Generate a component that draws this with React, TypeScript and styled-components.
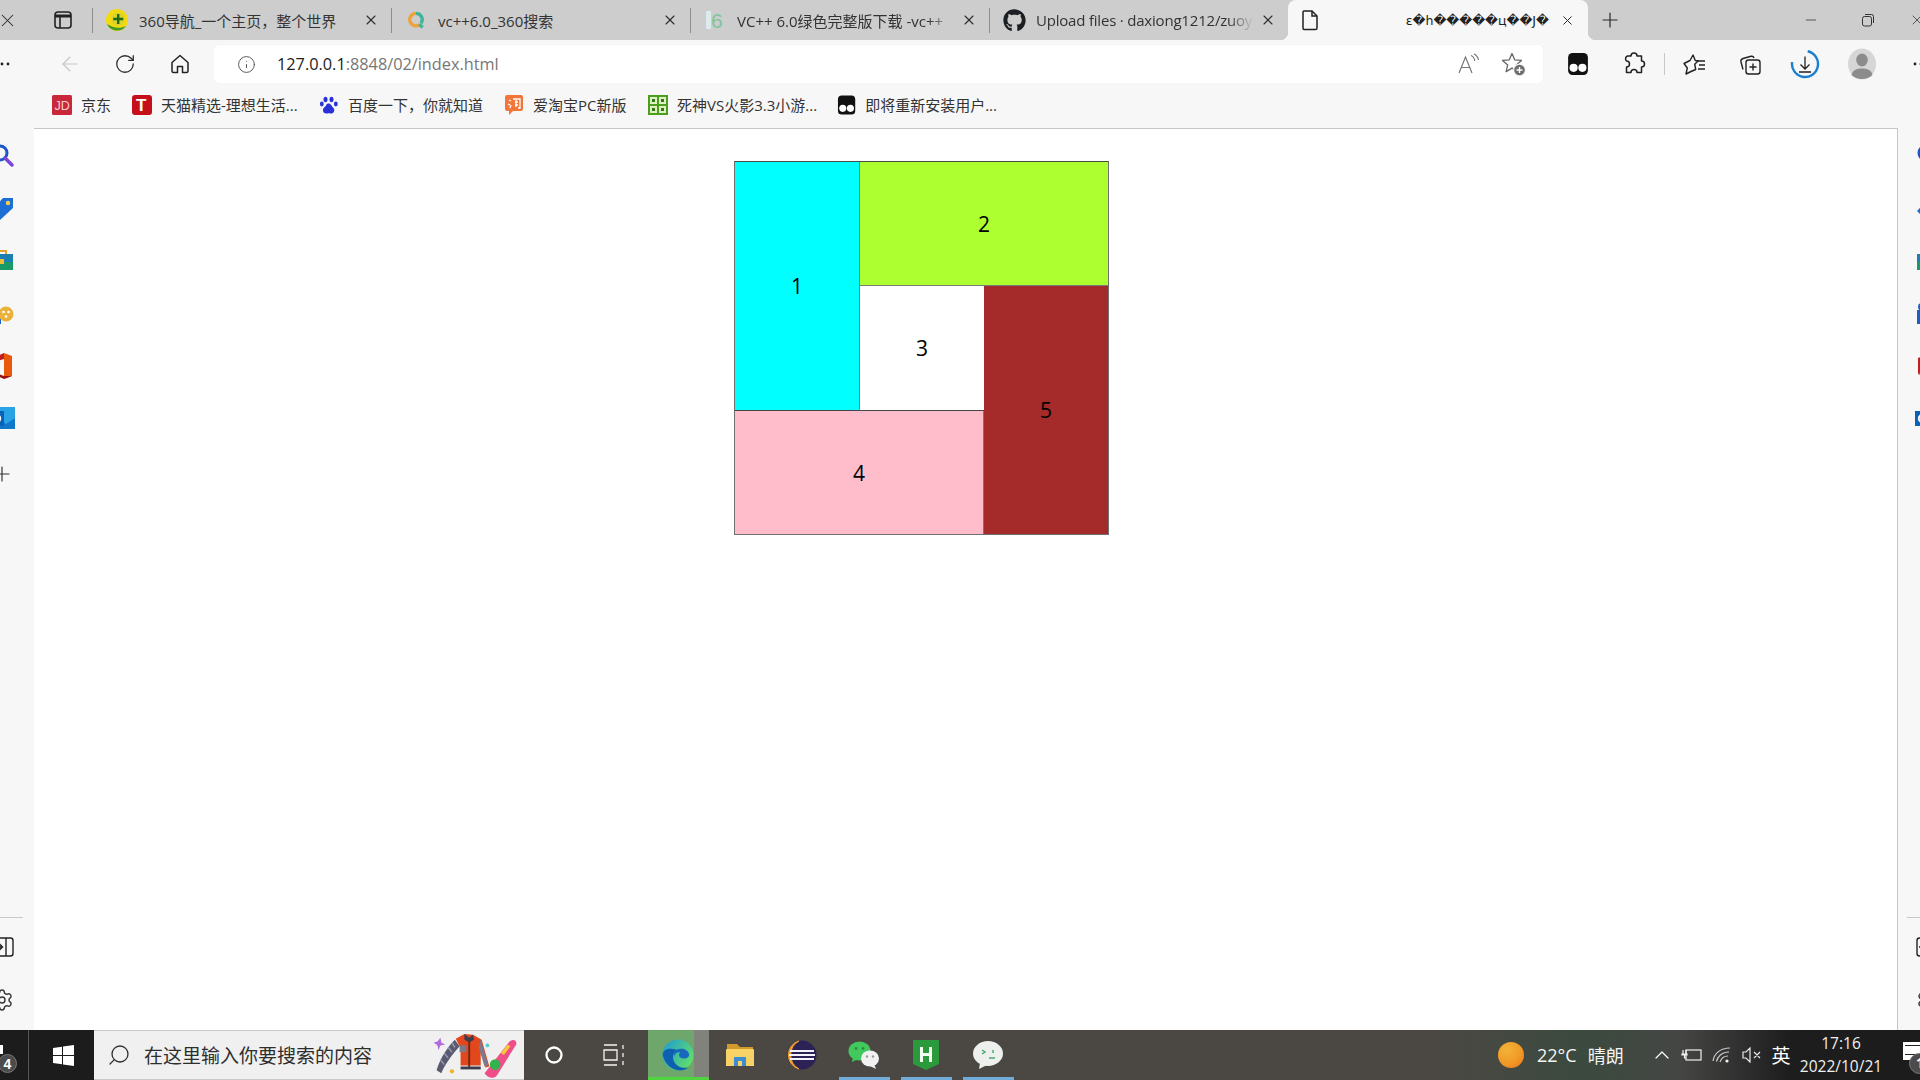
import React from 'react'
import styled, { createGlobalStyle } from 'styled-components'
import { FaGithub } from 'react-icons/fa'
import { ArrowLeft, RotateCw, Plus, X, Minus, Info, Search, ChevronUp, Settings } from 'lucide-react'

const GlobalStyle = createGlobalStyle`
  html, body { margin: 0; padding: 0; background: #fff; }
  body { width: 1920px; height: 1080px; overflow: hidden; font-family: "Open Sans", "Noto Sans CJK SC", sans-serif; }
  * { box-sizing: border-box; }
`

const Page = styled.div`
  width: 1920px;
  height: 1080px;
  display: flex;
  flex-direction: column;
  overflow: hidden;
`

/* ---- tab strip ---- */
const TabStrip = styled.div`
  height: 40px;
  flex: none;
  display: flex;
  align-items: center;
  background: #cdcdcd;
  color: #2b2b2b;
`
const Slot = styled.div<{ $w: number }>`
  width: ${p => p.$w}px;
  flex: none;
  display: flex;
  align-items: center;
  justify-content: center;
`
const ClippedLeft = styled.div<{ $w: number }>`
  width: ${p => p.$w}px;
  flex: none;
  display: flex;
  align-items: center;
  svg { margin-left: -3px; }
`
const EdgeClose = styled(X)`
  margin-left: 18px;
  flex: none;
`
const TabDivider = styled.div`
  width: 1px;
  height: 25px;
  flex: none;
  background: #8d8d8d;
`
const Tab = styled.div`
  width: 298px;
  height: 40px;
  flex: none;
  display: flex;
  align-items: center;
  padding: 0 12px;
`
const FavBox = styled.div`
  width: 24px;
  flex: none;
  display: flex;
  justify-content: center;
`
const TabTitle = styled.div<{ $fade?: boolean; $tight?: boolean }>`
  flex: 1;
  min-width: 0;
  margin: 0 6px 0 10px;
  font-size: 15px;
  white-space: nowrap;
  overflow: hidden;
  color: #333;
  ${p => p.$tight && 'letter-spacing: -0.2px;'}
  ${p => p.$fade && 'mask-image: linear-gradient(to right, #000 88%, transparent 100%);'}
`
const ActiveTab = styled.div`
  position: relative;
  width: 300px;
  height: 40px;
  flex: none;
  display: flex;
  align-items: center;
  padding: 0 13px 0 11px;
  background: #f7f7f7;
  border-radius: 8px 8px 0 0;
  &::before, &::after {
    content: '';
    position: absolute;
    bottom: 0;
    width: 8px;
    height: 8px;
  }
  &::before { left: -8px; background: radial-gradient(circle at 0 0, transparent 8px, #f7f7f7 8.5px); }
  &::after { right: -8px; background: radial-gradient(circle at 100% 0, transparent 8px, #f7f7f7 8.5px); }
`
const GarbledTitle = styled.div`
  flex: 1;
  text-align: right;
  margin-right: 11px;
  font-family: "DejaVu Sans", sans-serif;
  font-size: 12.6px;
  white-space: nowrap;
  color: #222;
`
const Spacer = styled.div`
  flex: 1;
`

/* ---- toolbar ---- */
const Toolbar = styled.div`
  height: 43px;
  flex: none;
  display: flex;
  align-items: flex-end;
  background: #f7f7f7;
  color: #2b2b2b;
`
const ToolbarBtn = styled.div<{ $w: number }>`
  width: ${p => p.$w}px;
  height: 38px;
  flex: none;
  display: flex;
  align-items: center;
  justify-content: center;
`
const ClippedDots = styled.div`
  width: 42px;
  height: 38px;
  flex: none;
  display: flex;
  align-items: center;
`
const AddressBar = styled.div`
  width: 1329px;
  height: 38px;
  flex: none;
  margin-left: 7px;
  display: flex;
  align-items: center;
  padding-left: 23px;
  background: #fff;
  border-radius: 5px;
  box-shadow: 0 0 2px rgba(0, 0, 0, 0.06);
`
const Url = styled.div`
  flex: 1;
  margin-left: 21px;
  font-size: 16.3px;
  color: #767676;
  b { font-weight: 400; color: #222; }
`
const ToolbarDivider = styled.div`
  width: 1px;
  height: 22px;
  flex: none;
  margin: 0 15px 8px 10px;
  align-self: flex-end;
  background: #c9c9c9;
`

/* ---- bookmarks ---- */
const BookmarkWrap = styled.div`
  height: 46px;
  flex: none;
  background: #f7f7f7;
  padding: 0 22px 0 34px;
`
const BookmarkRow = styled.div`
  height: 46px;
  display: flex;
  align-items: center;
  padding: 0 0 2px 18px;
  border-bottom: 1px solid #c6c6c6;
`
const Bookmark = styled.div<{ $w: number }>`
  width: ${p => p.$w}px;
  flex: none;
  display: flex;
  align-items: center;
  gap: 9px;
  font-size: 15px;
  color: #333;
  white-space: nowrap;
`

/* ---- main area ---- */
const Main = styled.div`
  flex: 1;
  min-height: 0;
  display: flex;
`
const SideBar = styled.div<{ $w: number; $shift: number }>`
  width: ${p => p.$w}px;
  flex: none;
  display: flex;
  flex-direction: column;
  align-items: center;
  padding-bottom: 4px;
  overflow: hidden;
  background: #f7f7f7;
  color: #333;
  & > * { margin-left: ${p => p.$shift}px; flex: none; }
`
const SideIcon = styled.div`
  width: 30px;
  height: 52.6px;
  display: flex;
  align-items: center;
  justify-content: center;
`
const SidePlus = styled(SideIcon)`
  padding-top: 6px;
`
const SideGap = styled.div`
  flex: 1;
`
const SideLine = styled.div`
  width: 42px;
  height: 1px;
  background: #c8c8c8;
  margin-bottom: 3px;
`
const Content = styled.div`
  flex: 1;
  background: #fff;
  border-right: 1px solid #c6c6c6;
  padding: 32px 0 0 700px;
`
const Board = styled.div`
  width: 375px;
  height: 374px;
  display: grid;
  grid-template-columns: 125px 124px 124px;
  grid-template-rows: 124px 125px 123px;
  border: 1px solid #707070;
  border-top-color: #4a4a4a;
`
const Cell = styled.div<{ $bg: string; $col: string; $row: string; $right?: string; $bottom?: string }>`
  grid-column: ${p => p.$col};
  grid-row: ${p => p.$row};
  display: flex;
  align-items: center;
  justify-content: center;
  background: ${p => p.$bg};
  border-right: ${p => (p.$right ? `1px solid ${p.$right}` : 'none')};
  border-bottom: ${p => (p.$bottom ? `1px solid ${p.$bottom}` : 'none')};
  font-family: "Open Sans", sans-serif;
  font-size: 21px;
  color: #000;
`

/* ---- taskbar ---- */
const Taskbar = styled.div`
  height: 50px;
  flex: none;
  display: flex;
  color: #fff;
  background: linear-gradient(to right, #4b4843 0, #4b4843 1440px, #3b4a3e 1580px, #454644 1680px, #1d1d1d 1790px, #1c1c1c 100%);
`
const StartArea = styled.div`
  position: relative;
  width: 94px;
  flex: none;
  display: flex;
  align-items: center;
  background: #1c1c1c;
`
const HiddenWindow = styled.div`
  width: 29px;
  height: 50px;
  flex: none;
  border-right: 1px solid #555;
`
const LeftCount = styled.div`
  position: absolute;
  left: -2px;
  top: 24px;
  width: 19px;
  height: 19px;
  display: flex;
  align-items: center;
  justify-content: center;
  border-radius: 50%;
  background: #4b4b4b;
  border: 1px solid #777;
  font-family: "Liberation Sans", sans-serif;
  font-size: 14px;
  font-weight: 700;
`
const LeftTile = styled.div`
  position: absolute;
  left: 0;
  top: 15px;
  width: 3px;
  height: 9px;
  background: #fff;
`
const StartBtn = styled.div`
  flex: 1;
  display: flex;
  justify-content: center;
  padding-left: 3px;
`
const SearchBox = styled.div`
  width: 430px;
  flex: none;
  display: flex;
  align-items: center;
  padding: 0 2px 0 13px;
  background: #f0f0f0;
  border-top: 1px solid #c8c8c8;
  border-bottom: 1px solid #c8c8c8;
  color: #2e2e2e;
`
const MirroredSearch = styled(Search)`
  flex: none;
  transform: scaleX(-1);
`
const SearchText = styled.div`
  flex: 1;
  margin-left: 13px;
  font-size: 19px;
  white-space: nowrap;
`
const TaskBtn = styled.div<{ $w: number; $open?: boolean }>`
  position: relative;
  width: ${p => p.$w}px;
  height: 50px;
  flex: none;
  display: flex;
  align-items: center;
  justify-content: center;
  ${p => p.$open && `
    &::after {
      content: '';
      position: absolute;
      left: 6px;
      right: 5px;
      bottom: 0;
      height: 3px;
      background: #71acd9;
    }
  `}
`
const EdgeBtn = styled.div`
  width: 61px;
  height: 50px;
  flex: none;
  margin-left: 4px;
  padding: 3px 1px 0 0;
  display: flex;
  align-items: center;
  justify-content: center;
  border-bottom: 3px solid #4fd33f;
  background: linear-gradient(to right, #6fa66c 0, #6fa66c 46px, #82827c 46px);
`
const Tray = styled.div`
  margin-left: auto;
  width: 422px;
  flex: none;
  display: flex;
  align-items: center;
  position: relative;
`
const Weather = styled.div`
  width: 149px;
  flex: none;
  display: flex;
  align-items: center;
  font-size: 18px;
  color: #f4f4f4;
  span:first-of-type { margin: 0 11px 0 13px; }
`
const Sun = styled.div`
  width: 26px;
  height: 26px;
  flex: none;
  border-radius: 50%;
  background: radial-gradient(circle at 35% 30%, #f3b23a 0, #f09a26 55%, #ef6f16 100%);
`
const TrayIcon = styled.div`
  width: 30px;
  flex: none;
  display: flex;
  justify-content: center;
`
const Lang = styled.div`
  width: 28px;
  flex: none;
  text-align: center;
  font-size: 19px;
`
const Clock = styled.div`
  width: 92px;
  flex: none;
  text-align: center;
  font-size: 15.5px;
  line-height: 23px;
  color: #f0f0f0;
  font-family: "Open Sans", sans-serif;
`
const NotifyBox = styled.div`
  width: 17px;
  height: 18px;
  margin: -8px 0 0 16px;
  flex: none;
  background: #fff;
  padding: 3px 0 0 2px;
  &::before {
    content: '';
    display: block;
    height: 8px;
    border-top: 1px solid #222;
    border-bottom: 1px solid #222;
  }
`
const NotifyCount = styled.div`
  position: absolute;
  left: 411px;
  top: 23px;
  width: 21px;
  height: 21px;
  padding-left: 6px;
  border-radius: 50%;
  background: #4b4b4b;
  border: 1px solid #777;
  font-size: 14px;
  font-weight: 700;
  line-height: 18px;
`

/* ---- drawings ---- */
const Fav360 = () => (
  <svg width="24" height="24" viewBox="0 0 24 24">
    <circle cx="12" cy="12" r="11" fill="#f4d90f" />
    <path d="M2 16a11 11 0 0 0 19 2c-6 3-13 2-19-2z" fill="#3f9a2a" />
    <circle cx="13" cy="11" r="6.6" fill="#d8d22a" />
    <path d="M12 6h2.4v3.8h3.8v2.4h-3.8V16H12v-3.8H8.2V9.8H12z" fill="#1f6b14" />
  </svg>
)
const FavSearch = () => (
  <svg width="20" height="20" viewBox="0 0 24 24" fill="none">
    <path d="M12 4a7.5 7.5 0 1 0 4.5 13.5" stroke="#f0a23a" strokeWidth="4" />
    <path d="M12 4a7.5 7.5 0 0 1 6 12" stroke="#3fb59c" strokeWidth="4" />
    <path d="M16 17l4 4" stroke="#3fb59c" strokeWidth="4" />
  </svg>
)
const FavSix = () => (
  <svg width="24" height="24" viewBox="0 0 24 24">
    <rect x="3" y="3" width="5" height="18" fill="#dcebee" />
    <text x="8" y="20" fontFamily="Liberation Sans" fontSize="21" fill="#7fc59a">6</text>
  </svg>
)
const PageIcon = () => (
  <svg width="22" height="24" viewBox="0 0 22 24" fill="none" stroke="#222" strokeWidth="1.5">
    <path d="M5 3h8l5 5v12a1.500 1.500 0 0 1-1.500 1.500h-11.500A1.500 1.500 0 0 1 4 20V4.500A1.500 1.500 0 0 1 5 3z" />
    <path d="M13 3v5h5" />
  </svg>
)
const TabPanelIcon = () => (
  <svg width="20" height="20" viewBox="0 0 20 20" fill="none" stroke="#222" strokeWidth="1.6">
    <rect x="2" y="2" width="16" height="16" rx="3" />
    <path d="M2 6h16" strokeWidth="3" />
    <path d="M7 6v12" />
  </svg>
)
const RestoreIcon = () => (
  <svg width="14" height="14" viewBox="0 0 14 14" fill="none" stroke="#333" strokeWidth="1">
    <rect x="1.500" y="3.500" width="9" height="9.500" rx="2" />
    <path d="M4 1.500h6.500a2 2 0 0 1 2 2V10" />
  </svg>
)
const HomeIcon = () => (
  <svg width="22" height="22" viewBox="0 0 22 22" fill="none" stroke="#222" strokeWidth="1.5" strokeLinejoin="round">
    <path d="M11 2.500L3 9.500V18a1.500 1.500 0 0 0 1.500 1.500H8.500V13.500h5v6h4A1.500 1.500 0 0 0 19 18V9.500z" />
  </svg>
)
const ReadAloudIcon = () => (
  <svg width="24" height="24" viewBox="0 0 24 24" fill="none" stroke="#777" strokeWidth="1.2">
    <path d="M2 21L8.500 5l6.500 16M4.500 15.500h8" />
    <path d="M14 3.500c2.500 1 3.500 3 3.800 5.500M17 2c2.800 1.300 4 3.500 4.500 6" />
  </svg>
)
const StarPlusIcon = () => (
  <svg width="26" height="26" viewBox="0 0 26 26" fill="none">
    <path d="M11 2.500l2.700 6.300 6.800.600-5.200 4.500 1.600 6.700-5.900-3.500-5.900 3.500 1.600-6.700-5.200-4.500 6.800-.600z" stroke="#666" strokeWidth="1.3" strokeLinejoin="round" />
    <circle cx="18.500" cy="19" r="6.500" fill="#f7f7f7" />
    <circle cx="18.500" cy="19" r="5.300" fill="#6e6e6e" />
    <path d="M18.500 16v6M15.500 19h6" stroke="#fff" strokeWidth="1.400" />
  </svg>
)
const MonkeyIcon = ({ size }: { size: number }) => (
  <svg width={size} height={size} viewBox="0 0 20 20">
    <rect x="1" y="0" width="18" height="20" rx="4" fill="#111" />
    <circle cx="6" cy="13.500" r="3.700" fill="#fff" />
    <circle cx="14" cy="13.500" r="3.700" fill="#fff" />
  </svg>
)
const PuzzleIcon = () => (
  <svg width="24" height="26" viewBox="0 0 24 26" fill="none" stroke="#222" strokeWidth="1.5" strokeLinejoin="round">
    <path d="M9 5a3 3 0 0 1 6 0h4.500v5a3 3 0 0 1 0 6v5.500H15a3 3 0 0 0-6 0H4.500V16a3 3 0 0 0 0-6 3 3 0 0 1 1-5z" />
  </svg>
)
const FavListIcon = () => (
  <svg width="24" height="24" viewBox="0 0 24 24" fill="none" stroke="#222" strokeWidth="1.4" strokeLinejoin="round">
    <path d="M10 3l2.300 5.500 3 .3-3.600 3.400 1 5.300L8 19.500l-5 2.500 1.300-6L1 11.500 7 8.500z" />
    <path d="M15 9h7M16 13h6M15 17h7" />
  </svg>
)
const CollectionsIcon = () => (
  <svg width="24" height="24" viewBox="0 0 24 24" fill="none" stroke="#222" strokeWidth="1.4">
    <rect x="8" y="8" width="14" height="14" rx="2.500" />
    <path d="M15 11.500v7M11.500 15h7" />
    <path d="M5 17.500l-2-7.500A3 3 0 0 1 5 6.500L13 4.300a2.500 2.500 0 0 1 3 1.700" />
  </svg>
)
const DownloadIcon = () => (
  <svg width="30" height="32" viewBox="0 0 30 32" fill="none">
    <circle cx="15" cy="16" r="13" stroke="#1a7fd0" strokeWidth="2.400" strokeDasharray="60 22" transform="rotate(-78 15 16)" />
    <path d="M15 8.500v12M10.500 16.500l4.500 4.500 4.500-4.500M9 24h12" stroke="#222" strokeWidth="1.300" />
  </svg>
)
const AvatarIcon = () => (
  <svg width="28" height="32" viewBox="0 0 28 32">
    <ellipse cx="14" cy="16" rx="14" ry="15.500" fill="#d6d6d6" />
    <ellipse cx="14" cy="12" rx="5.800" ry="6.500" fill="#8c8c8c" />
    <path d="M3.500 27c1-5 5-6.500 10.500-6.500S23.500 22 24.500 27c-2.600 2.600-6.500 4-10.500 4s-8-1.400-10.500-4z" fill="#8c8c8c" />
  </svg>
)
const Dots = ({ count }: { count: number }) => (
  <svg width={count === 2 ? 10 : 22} height="4" viewBox={`0 0 ${count === 2 ? 10 : 22} 4`} fill="#222">
    <circle cx="2" cy="2" r="1.400" />
    <circle cx="8" cy="2" r="1.400" />
    {count === 3 && <circle cx="14" cy="2" r="1.400" />}
  </svg>
)
const JdIcon = () => (
  <svg width="20" height="20" viewBox="0 0 20 20">
    <rect width="20" height="20" rx="1.500" fill="#c8283a" />
    <text x="2.500" y="15" fontFamily="Liberation Sans" fontSize="12.500" fill="#f6cfd3">JD</text>
  </svg>
)
const TmallIcon = () => (
  <svg width="20" height="20" viewBox="0 0 20 20">
    <rect width="20" height="20" rx="3" fill="#c5101c" />
    <text x="4" y="16" fontFamily="Liberation Sans" fontWeight="700" fontSize="17" fill="#fff">T</text>
  </svg>
)
const BaiduIcon = () => (
  <svg width="20" height="20" viewBox="0 0 20 20" fill="#2932d8">
    <ellipse cx="6.500" cy="4.500" rx="2" ry="2.800" />
    <ellipse cx="12.500" cy="4.500" rx="2" ry="2.800" />
    <ellipse cx="2.800" cy="9" rx="1.900" ry="2.400" />
    <ellipse cx="16.800" cy="9" rx="1.900" ry="2.400" />
    <path d="M9.500 8.500c2.500 0 3 2.500 5 4.500 2 2.500 0 6-3 5.500-1-.2-2-.3-3 0-3 .5-5-1.500-4.500-4 .5-2.500 3-3 3-4 .5-1.500 1.500-2 2.500-2z" />
  </svg>
)
const TaoIcon = () => (
  <svg width="20" height="22" viewBox="0 0 20 22">
    <path d="M3 1h14a2 2 0 0 1 2 2v12a2 2 0 0 1-2 2H9l-4 4v-4H3a2 2 0 0 1-2-2V3a2 2 0 0 1 2-2z" fill="#f2763a" />
    <path d="M5 6l2 1M4 10l2 1M6 14l1-3M9 5h7v9h-2M11 8h3M11 11h3M12 6v7" stroke="#fff" strokeWidth="1.300" fill="none" />
  </svg>
)
const GameIcon = () => (
  <svg width="20" height="20" viewBox="0 0 20 20">
    <rect width="20" height="20" fill="#4b9f1d" />
    <path d="M2 2h7v7H2zM11 2h7v7h-7zM2 11h7v7H2zM11 11h7v7h-7z" fill="#dff0c8" />
    <path d="M4 4h3v3H4zM13 4h3v3h-3zM4 13h3v3H4zM13 13h3v3h-3z" fill="#2f7a10" />
  </svg>
)
const SearchGlass = () => (
  <svg width="26" height="26" viewBox="0 0 26 26" fill="none">
    <circle cx="11" cy="11" r="7" stroke="#1c55c7" strokeWidth="3" />
    <path d="M16 16l7 7" stroke="#7a44d8" strokeWidth="3.500" strokeLinecap="round" />
  </svg>
)
const TagIcon = () => (
  <svg width="26" height="26" viewBox="0 0 26 26">
    <path d="M14 3h10v10L11 25 2 16z" fill="#1d6fd6" />
    <circle cx="19" cy="8" r="2.200" fill="#f6d24a" />
  </svg>
)
const ToolboxIcon = () => (
  <svg width="26" height="26" viewBox="0 0 26 26">
    <path d="M9 7V4h8v3" stroke="#e2a52a" strokeWidth="2" fill="none" />
    <rect x="2" y="7" width="22" height="8" fill="#1b7fb0" />
    <rect x="2" y="15" width="22" height="8" fill="#1a9a66" />
    <rect x="11" y="12" width="4" height="5" fill="#f2bc3a" />
  </svg>
)
const GamesIcon = () => (
  <svg width="26" height="26" viewBox="0 0 26 26">
    <circle cx="7" cy="7" r="4" fill="#1b5fc4" />
    <rect x="2" y="10" width="10" height="14" fill="#1b5fc4" />
    <circle cx="17" cy="14" r="7.500" fill="#eab23b" />
    <circle cx="14.500" cy="12" r="1.300" fill="#fff" />
    <circle cx="19.500" cy="12" r="1.300" fill="#fff" />
    <circle cx="17" cy="16.500" r="1.300" fill="#fff" />
  </svg>
)
const OfficeIcon = () => (
  <svg width="26" height="28" viewBox="0 0 26 28">
    <path d="M15 1l8 3v20l-8 3z" fill="#e8590c" />
    <path d="M15 1L3 6v16l5-2V9l7-2z" fill="#c2201f" />
    <path d="M3 22l12 5 8-3H15l-8-3z" fill="#9b1414" />
  </svg>
)
const OutlookIcon = () => (
  <svg width="26" height="26" viewBox="0 0 26 26">
    <rect x="8" y="2" width="18" height="22" fill="#2aa3e6" />
    <path d="M8 13l9 6 9-6v11H8z" fill="#0f78c8" />
    <rect x="0" y="6" width="15" height="15" fill="#0a62b8" />
    <circle cx="7.500" cy="13.500" r="3.700" fill="none" stroke="#fff" strokeWidth="2" />
  </svg>
)
const LoginIcon = () => (
  <svg width="26" height="22" viewBox="0 0 26 22" fill="none" stroke="#222" strokeWidth="1.400">
    <rect x="2" y="2" width="22" height="18" rx="2.500" />
    <path d="M17 2v18M4 11h9M10 7.500l3.500 3.500-3.500 3.500" />
  </svg>
)
const WinLogo = () => (
  <svg width="21" height="21" viewBox="0 0 21 21" fill="#fff">
    <path d="M0 3l9-1.300V10H0zM10 1.500L21 0v10H10zM0 11h9v8.300L0 18zM10 11h11v10l-11-1.500z" />
  </svg>
)
const SearchArt = () => (
  <svg width="96" height="48" viewBox="0 0 92 50">
    <path d="M4 12l4-1 3-4 1 5 4 2-5 1-2 5-1-5z" fill="#b06be0" />
    <path d="M26 9C20 15 11 27 7 41l5 3c4-10 12-20 19-28z" fill="#5a5a70" />
    <path d="M23 12l3 5M19 17l4 5M15 23l4 5M11 30l4 5" stroke="#9a9ab0" strokeWidth="1.500" />
    <path d="M27 8l9-5 9 1 9 5 8 28-4 1-5-15v13H32V18z" fill="#e2481b" />
    <path d="M36 3l5 4 4-3 1 5-5 3-5-3z" fill="#3d3d4e" />
    <path d="M40 10h2v28h-2z" fill="#6b2a18" />
    <path d="M53 9l8 27-4 1-6-20z" fill="#7d7a90" />
    <rect x="31" y="15" width="7" height="7" fill="#7a7a88" />
    <rect x="32" y="37" width="21" height="3" fill="#3d3d4e" />
    <circle cx="23" cy="42" r="2.200" fill="#f0b020" />
    <circle cx="60" cy="15" r="2" fill="#58d0d0" />
    <path d="M57 44L83 11c3-3 8-2 7 3L70 46c-3 4-9 4-13-2z" fill="#ee4f88" />
    <circle cx="68" cy="35" r="5.500" fill="#2fb34a" />
    <path d="M74 23l7-9 3 2-7 9z" fill="#f5c93b" />
  </svg>
)
const CortanaIcon = () => (
  <svg width="20" height="20" viewBox="0 0 20 20" fill="none">
    <circle cx="10" cy="10" r="7.500" stroke="#fff" strokeWidth="2.300" />
  </svg>
)
const TaskViewIcon = () => (
  <svg width="22" height="22" viewBox="0 0 22 22" fill="none" stroke="#f2f2f2" strokeWidth="1.300">
    <path d="M1 1h13M1 21h13M1 6h13v10H1zM20 1v4M20 9v4M20 17v4" />
  </svg>
)
const EdgeIcon = () => (
  <svg width="32" height="32" viewBox="0 0 32 32">
    <defs>
      <linearGradient id="edgeTop" x1="0" y1="0" x2="1" y2="0.600">
        <stop offset="0" stopColor="#1c9ad6" />
        <stop offset="1" stopColor="#5fdc6e" />
      </linearGradient>
    </defs>
    <circle cx="16" cy="16" r="15.500" fill="url(#edgeTop)" />
    <path d="M.6 15C2 24 9 31.500 18 31.400c3-.1 6-1 8.500-3-6 1.500-12-1-14.500-6-2-4-1-9 3-11.500C8 8.500 2 10 .6 15z" fill="#0d5fb0" />
    <path d="M15 10.500c5-2 11 0 12 4.500.5 2.500-1.500 4.500-5 4.500-3 0-5-1.500-5-3.500 0-1.200.5-2 1.300-2.400C16 12.800 13 14 12.500 17.500 11.500 14 12.500 11.500 15 10.500z" fill="#1668bc" />
  </svg>
)
const FolderIcon = () => (
  <svg width="30" height="26" viewBox="0 0 30 26">
    <path d="M2 2h10l3 3h13v4H2z" fill="#d29a2a" />
    <path d="M2 7h26a1 1 0 0 1 1 1v16H1V8a1 1 0 0 1 1-1z" fill="#f6d267" />
    <path d="M9 15h12v9h-4v-5h-4v5H9z" fill="#3d8bd0" />
  </svg>
)
const EclipseIcon = () => (
  <svg width="32" height="30" viewBox="0 0 32 30">
    <circle cx="16" cy="15" r="14.500" fill="#2c2255" />
    <path d="M13 1A14.500 14.500 0 0 0 13 29 16 16 0 0 1 13 1z" fill="#f0a030" stroke="#f0a030" />
    <path d="M4 10h24v2H4zM3 14h26v2H3zM4 18h24v2H4z" fill="#f5f5ff" />
  </svg>
)
const WechatIcon = () => (
  <svg width="32" height="30" viewBox="0 0 32 30">
    <ellipse cx="11.500" cy="11" rx="11" ry="9.500" fill="#42c95e" />
    <path d="M5 17l-1 5 6-3z" fill="#42c95e" />
    <circle cx="8" cy="8.500" r="1.400" fill="#2c8f40" />
    <circle cx="15" cy="8.500" r="1.400" fill="#2c8f40" />
    <ellipse cx="22" cy="18.500" rx="9" ry="8" fill="#f1f1f1" />
    <path d="M26 24l2 5-6-3z" fill="#f1f1f1" />
    <circle cx="19" cy="16.500" r="1.200" fill="#999" />
    <circle cx="25" cy="16.500" r="1.200" fill="#999" />
  </svg>
)
const HbuilderIcon = () => (
  <svg width="26" height="30" viewBox="0 0 26 30">
    <path d="M0 0h26v24l-13 6-13-6z" fill="#2b9a3d" />
    <path d="M7 7h3v6h6V7h3v15h-3v-6h-6v6H7z" fill="#f4fff4" />
  </svg>
)
const ChatIcon = () => (
  <svg width="32" height="30" viewBox="0 0 32 30">
    <ellipse cx="16" cy="13.500" rx="15" ry="12.500" fill="#eef0ee" />
    <path d="M8 23l-1 6 8-4z" fill="#eef0ee" />
    <path d="M10 10l3 2-3 2M21 10v3M17 18h6" stroke="#4aa870" strokeWidth="1.500" fill="none" />
  </svg>
)
const BatteryIcon = () => (
  <svg width="22" height="16" viewBox="0 0 22 16" fill="none" stroke="#f0f0f0" strokeWidth="1.200">
    <rect x="5" y="3" width="15" height="10" />
    <path d="M2 3v4M5 3v4M1 7h5v1H1zM3.500 8v3h2" />
  </svg>
)
const WifiIcon = () => (
  <svg width="20" height="18" viewBox="0 0 20 18" fill="none" stroke="#c8c8c8" strokeWidth="1.200">
    <path d="M1 15C2 8 8 2 18 2M4.500 15.500C5.500 11 9.500 6 17 6M8 16c1-3 3-6 8-6" />
    <circle cx="15" cy="15" r="1.600" fill="#f4f4f4" stroke="none" />
  </svg>
)
const VolumeIcon = () => (
  <svg width="20" height="16" viewBox="0 0 20 16" fill="none" stroke="#e8e8e8" strokeWidth="1.200">
    <path d="M1 5h3l4-4v14l-4-4H1zM12 5l6 6M18 5l-6 6" />
  </svg>
)

const openApps = [<WechatIcon key="w" />, <HbuilderIcon key="h" />, <ChatIcon key="c" />]

const App: React.FC = () => {
  const sideIcons = [<SearchGlass />, <TagIcon />, <ToolboxIcon />, <GamesIcon />, <OfficeIcon />, <OutlookIcon />]

  const renderSide = (w: number, shift: number) => (
    <SideBar $w={w} $shift={shift}>
      {sideIcons.map((icon, i) => <SideIcon key={i}>{icon}</SideIcon>)}
      <SidePlus><Plus size={24} strokeWidth={1.2} /></SidePlus>
      <SideGap />
      <SideLine />
      <SideIcon><LoginIcon /></SideIcon>
      <SideIcon><Settings size={24} strokeWidth={1.4} /></SideIcon>
    </SideBar>
  )

  return (
    <Page>
      <GlobalStyle />
      <TabStrip>
        <ClippedLeft $w={34}><X size={21} strokeWidth={1.2} /></ClippedLeft>
        <Slot $w={58}><TabPanelIcon /></Slot>
        <TabDivider />
        <Tab>
          <FavBox><Fav360 /></FavBox>
          <TabTitle>360导航_一个主页，整个世界</TabTitle>
          <X size={16} strokeWidth={1.6} />
        </Tab>
        <TabDivider />
        <Tab>
          <FavBox><FavSearch /></FavBox>
          <TabTitle>vc++6.0_360搜索</TabTitle>
          <X size={16} strokeWidth={1.6} />
        </Tab>
        <TabDivider />
        <Tab>
          <FavBox><FavSix /></FavBox>
          <TabTitle $fade>VC++ 6.0绿色完整版下载 -vc++</TabTitle>
          <X size={16} strokeWidth={1.6} />
        </Tab>
        <TabDivider />
        <Tab>
          <FavBox><FaGithub size={23} color="#1b1f23" /></FavBox>
          <TabTitle $fade $tight>Upload files · daxiong1212/zuoye</TabTitle>
          <X size={16} strokeWidth={1.6} />
        </Tab>
        <ActiveTab>
          <PageIcon />
          <GarbledTitle>ε�h�����ц��J�</GarbledTitle>
          <X size={15} strokeWidth={1.6} />
        </ActiveTab>
        <Slot $w={44}><Plus size={24} strokeWidth={1.2} /></Slot>
        <Spacer />
        <Slot $w={57}><Minus size={16} strokeWidth={1.1} /></Slot>
        <Slot $w={57}><RestoreIcon /></Slot>
        <Slot $w={24}><EdgeClose size={16} strokeWidth={1.1} /></Slot>
      </TabStrip>

      <Toolbar>
        <ClippedDots><Dots count={2} /></ClippedDots>
        <ToolbarBtn $w={55}><ArrowLeft size={24} strokeWidth={1.1} color="#c4c4c4" /></ToolbarBtn>
        <ToolbarBtn $w={55}><RotateCw size={22} strokeWidth={1.4} /></ToolbarBtn>
        <ToolbarBtn $w={55}><HomeIcon /></ToolbarBtn>
        <AddressBar>
          <Info size={19} strokeWidth={1.1} color="#444" />
          <Url><b>127.0.0.1</b>:8848/02/index.html</Url>
          <ToolbarBtn $w={45}><ReadAloudIcon /></ToolbarBtn>
          <ToolbarBtn $w={45}><StarPlusIcon /></ToolbarBtn>
          <ToolbarBtn $w={7} />
        </AddressBar>
        <ToolbarBtn $w={70}><MonkeyIcon size={22} /></ToolbarBtn>
        <ToolbarBtn $w={41}><PuzzleIcon /></ToolbarBtn>
        <ToolbarDivider />
        <ToolbarBtn $w={30}><FavListIcon /></ToolbarBtn>
        <ToolbarBtn $w={80}><CollectionsIcon /></ToolbarBtn>
        <ToolbarBtn $w={30}><DownloadIcon /></ToolbarBtn>
        <ToolbarBtn $w={84}><AvatarIcon /></ToolbarBtn>
        <ToolbarBtn $w={40}><Dots count={3} /></ToolbarBtn>
      </Toolbar>

      <BookmarkWrap>
        <BookmarkRow>
          <Bookmark $w={80}><JdIcon />京东</Bookmark>
          <Bookmark $w={187}><TmallIcon />天猫精选-理想生活...</Bookmark>
          <Bookmark $w={185}><BaiduIcon />百度一下，你就知道</Bookmark>
          <Bookmark $w={144}><TaoIcon />爱淘宝PC新版</Bookmark>
          <Bookmark $w={189}><GameIcon />死神VS火影3.3小游...</Bookmark>
          <Bookmark $w={160}><MonkeyIcon size={20} />即将重新安装用户...</Bookmark>
        </BookmarkRow>
      </BookmarkWrap>

      <Main>
        {renderSide(34, -30)}
        <Content>
          <Board>
            <Cell $bg="#00ffff" $col="1" $row="1 / span 2" $right="#5f8a8a" $bottom="#444">1</Cell>
            <Cell $bg="#adff2f" $col="2 / span 2" $row="1" $bottom="#7a7a7a">2</Cell>
            <Cell $bg="#ffffff" $col="2" $row="2" $bottom="#444">3</Cell>
            <Cell $bg="#ffbccb" $col="1 / span 2" $row="3" $right="#777">4</Cell>
            <Cell $bg="#a52a2a" $col="3" $row="2 / span 2">5</Cell>
          </Board>
        </Content>
        {renderSide(22, 38)}
      </Main>

      <Taskbar>
        <StartArea>
          <LeftTile />
          <LeftCount>4</LeftCount>
          <HiddenWindow />
          <StartBtn><WinLogo /></StartBtn>
        </StartArea>
        <SearchBox>
          <MirroredSearch size={24} strokeWidth={1.3} />
          <SearchText>在这里输入你要搜索的内容</SearchText>
          <SearchArt />
        </SearchBox>
        <TaskBtn $w={60}><CortanaIcon /></TaskBtn>
        <TaskBtn $w={60}><TaskViewIcon /></TaskBtn>
        <EdgeBtn><EdgeIcon /></EdgeBtn>
        <TaskBtn $w={62}><FolderIcon /></TaskBtn>
        <TaskBtn $w={62}><EclipseIcon /></TaskBtn>
        {openApps.map((icon, i) => <TaskBtn key={i} $w={62} $open>{icon}</TaskBtn>)}
        <Tray>
          <Weather>
            <Sun />
            <span>22°C</span>
            <span>晴朗</span>
          </Weather>
          <TrayIcon><ChevronUp size={24} strokeWidth={1.2} /></TrayIcon>
          <TrayIcon><BatteryIcon /></TrayIcon>
          <TrayIcon><WifiIcon /></TrayIcon>
          <TrayIcon><VolumeIcon /></TrayIcon>
          <Lang>英</Lang>
          <Clock>17:16<br />2022/10/21</Clock>
          <NotifyBox />
          <NotifyCount>1</NotifyCount>
        </Tray>
      </Taskbar>
    </Page>
  )
}

export default App
